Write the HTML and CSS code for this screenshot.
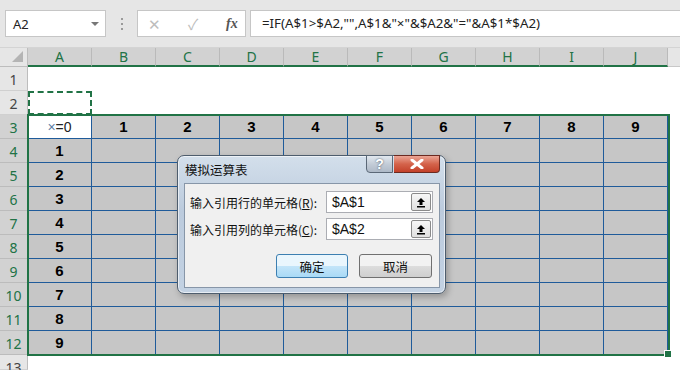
FILE: index.html
```html
<!DOCTYPE html>
<html lang="zh-CN">
<head>
    <meta charset="UTF-8">
    <title>模拟运算表</title>
    <link rel="stylesheet" href="styles.css">
</head>
<body>
    <div class="toolbar">
        <div class="namebox">
            <span>A2</span>
            <span class="caret"></span>
        </div>
        <div class="grip"><i></i><i></i><i></i></div>
        <div class="fxbox">
            <span class="cancel">✕</span>
            <span class="enter">✓</span>
            <span class="fx">fx</span>
        </div>
        <div class="formula">=IF(A$1&gt;$A2,"",A$1&amp;"×"&amp;$A2&amp;"="&amp;A$1*$A2)</div>
    </div>

    <div class="sheet">
        <div class="row head">
            <div class="rh corner"><span class="tri"></span></div>
            <div class="ch">A</div><div class="ch">B</div><div class="ch">C</div><div class="ch">D</div><div class="ch">E</div>
            <div class="ch">F</div><div class="ch">G</div><div class="ch">H</div><div class="ch">I</div><div class="ch">J</div>
            <div class="ch rest"></div>
        </div>
        <div class="row"><div class="rh">1</div><div class="blank"></div></div>
        <div class="row"><div class="rh">2</div><div class="blank"></div></div>
        <div class="row">
            <div class="rh sel">3</div>
            <div class="c corner-cell"><span class="times">×</span>=0</div>
            <div class="c b">1</div><div class="c b">2</div><div class="c b">3</div><div class="c b">4</div><div class="c b">5</div>
            <div class="c b">6</div><div class="c b">7</div><div class="c b">8</div><div class="c b">9</div>
            <div class="blank"></div>
        </div>
        <div class="row"><div class="rh sel">4</div><div class="c b">1</div><div class="c"></div><div class="c"></div><div class="c"></div><div class="c"></div><div class="c"></div><div class="c"></div><div class="c"></div><div class="c"></div><div class="c"></div><div class="blank"></div></div>
        <div class="row"><div class="rh sel">5</div><div class="c b">2</div><div class="c"></div><div class="c"></div><div class="c"></div><div class="c"></div><div class="c"></div><div class="c"></div><div class="c"></div><div class="c"></div><div class="c"></div><div class="blank"></div></div>
        <div class="row"><div class="rh sel">6</div><div class="c b">3</div><div class="c"></div><div class="c"></div><div class="c"></div><div class="c"></div><div class="c"></div><div class="c"></div><div class="c"></div><div class="c"></div><div class="c"></div><div class="blank"></div></div>
        <div class="row"><div class="rh sel">7</div><div class="c b">4</div><div class="c"></div><div class="c"></div><div class="c"></div><div class="c"></div><div class="c"></div><div class="c"></div><div class="c"></div><div class="c"></div><div class="c"></div><div class="blank"></div></div>
        <div class="row"><div class="rh sel">8</div><div class="c b">5</div><div class="c"></div><div class="c"></div><div class="c"></div><div class="c"></div><div class="c"></div><div class="c"></div><div class="c"></div><div class="c"></div><div class="c"></div><div class="blank"></div></div>
        <div class="row"><div class="rh sel">9</div><div class="c b">6</div><div class="c"></div><div class="c"></div><div class="c"></div><div class="c"></div><div class="c"></div><div class="c"></div><div class="c"></div><div class="c"></div><div class="c"></div><div class="blank"></div></div>
        <div class="row"><div class="rh sel">10</div><div class="c b">7</div><div class="c"></div><div class="c"></div><div class="c"></div><div class="c"></div><div class="c"></div><div class="c"></div><div class="c"></div><div class="c"></div><div class="c"></div><div class="blank"></div></div>
        <div class="row"><div class="rh sel">11</div><div class="c b">8</div><div class="c"></div><div class="c"></div><div class="c"></div><div class="c"></div><div class="c"></div><div class="c"></div><div class="c"></div><div class="c"></div><div class="c"></div><div class="blank"></div></div>
        <div class="row"><div class="rh sel">12</div><div class="c b">9</div><div class="c"></div><div class="c"></div><div class="c"></div><div class="c"></div><div class="c"></div><div class="c"></div><div class="c"></div><div class="c"></div><div class="c"></div><div class="blank"></div></div>
        <div class="row last"><div class="rh">13</div><div class="blank"></div></div>

        <!-- overlays: copy marquee, selection box -->
        <div class="marquee"></div>
        <div class="selection"><span class="handle"></span></div>
    </div>

    <div class="dialog">
        <div class="title">模拟运算表</div>
        <div class="help">?</div>
        <div class="close">
            <svg width="14" height="10" viewBox="0 0 14 10"><path d="M2 1 L12 9 M12 1 L2 9" stroke="#fff" stroke-width="3" stroke-linecap="round"/></svg>
        </div>
        <div class="client">
            <div class="field">
                <label>输入引用行的单元格(<u>R</u>):</label>
                <div class="input">
                    <span>$A$1</span>
                    <span class="pick"><svg width="10" height="11" viewBox="0 0 10 11"><path d="M5 1 L9 5 H6.5 V8 H3.5 V5 H1 Z" fill="#000"/><rect x="1" y="9" width="8" height="1.5" fill="#000"/></svg></span>
                </div>
            </div>
            <div class="field">
                <label>输入引用列的单元格(<u>C</u>):</label>
                <div class="input">
                    <span>$A$2</span>
                    <span class="pick"><svg width="10" height="11" viewBox="0 0 10 11"><path d="M5 1 L9 5 H6.5 V8 H3.5 V5 H1 Z" fill="#000"/><rect x="1" y="9" width="8" height="1.5" fill="#000"/></svg></span>
                </div>
            </div>
            <div class="buttons">
                <button class="ok">确定</button>
                <button>取消</button>
            </div>
        </div>
    </div>
</body>
</html>
```

FILE: styles.css
```css
body {
    margin: 0;
    width: 680px;
    height: 370px;
    overflow: hidden;
    position: relative;
    font-family: "Noto Sans", "Noto Sans CJK SC", sans-serif;
    background-color: #ffffff;
}
.toolbar {
    height: 48px;
    box-sizing: border-box;
    background-color: #e6e6e6;
    border-bottom: 1px solid #d4d4d4;
    display: flex;
    align-items: center;
    padding-left: 5px;
}
.namebox {
    width: 101px;
    height: 27px;
    box-sizing: border-box;
    background-color: #fff;
    border: 1px solid #c6c6c6;
    display: flex;
    align-items: center;
    justify-content: space-between;
    padding: 0 6px 0 7px;
    font-size: 13px;
    color: #222;
}
.caret {
    width: 0;
    height: 0;
    border-left: 4px solid transparent;
    border-right: 4px solid transparent;
    border-top: 4px solid #777;
}
.grip {
    width: 31px;
    display: flex;
    flex-direction: column;
    align-items: center;
    gap: 3px;
}
.grip i {
    width: 2px;
    height: 2px;
    background-color: #9a9a9a;
}
.fxbox {
    width: 109px;
    height: 27px;
    box-sizing: border-box;
    background-color: #fff;
    border: 1px solid #c6c6c6;
    display: flex;
    align-items: center;
    font-size: 15px;
    color: #bdbdbd;
}
.cancel { margin-left: 10px; width: 40px; }
.enter { width: 38px; }
.fx {
    font-family: "Liberation Serif", serif;
    font-style: italic;
    font-weight: bold;
    color: #555;
    font-size: 14px;
}
.formula {
    margin-left: 4px;
    flex: 1;
    height: 27px;
    box-sizing: border-box;
    background-color: #fff;
    border: 1px solid #c6c6c6;
    border-right: none;
    padding-left: 11px;
    font-size: 13.3px;
    line-height: 25px;
    color: #222;
}
.sheet {
    position: relative;
}
.row {
    display: flex;
    height: 24px;
}
.row.head {
    height: 19px;
}
.row.last {
    height: 15px;
}
.rh {
    width: 28px;
    flex: none;
    box-sizing: border-box;
    background-color: #e6e6e6;
    border-right: 1px solid #bdbdbd;
    border-bottom: 1px solid #d0d0d0;
    color: #444;
    font-size: 14px;
    text-align: center;
    line-height: 26px;
}
.rh.sel {
    background-color: #d2d2d2;
    color: #217346;
    border-bottom-color: #bcbcbc;
}
.rh.corner {
    position: relative;
    border-bottom: 1px solid #bdbdbd;
}
.tri {
    position: absolute;
    right: 4px;
    bottom: 4px;
    width: 0;
    height: 0;
    border-left: 11px solid transparent;
    border-bottom: 11px solid #b4b4b4;
}
.ch {
    width: 64px;
    flex: none;
    box-sizing: border-box;
    background-color: #d2d2d2;
    border-right: 1px solid #bababa;
    border-bottom: 2px solid #217346;
    color: #217346;
    font-size: 14px;
    text-align: center;
    line-height: 18px;
}
.ch.rest {
    flex: 1;
    background-color: #e6e6e6;
    border-right: none;
    border-bottom: 1px solid #c8c8c8;
}
.blank {
    flex: 1;
}
.c {
    width: 64px;
    flex: none;
    box-sizing: border-box;
    background-color: #c6c6c6;
    border-right: 1px solid #1f5b9a;
    border-bottom: 1px solid #1f5b9a;
    font-family: "Liberation Sans", sans-serif;
    font-size: 15px;
    text-align: center;
    line-height: 24px;
    color: #000;
}
.c.b {
    font-weight: bold;
}
.c.corner-cell {
    background-color: #fff;
    font-size: 14px;
    color: #222;
}
.times {
    color: #5e7fa6;
}
.marquee {
    position: absolute;
    left: 28px;
    top: 43px;
    width: 64px;
    height: 24px;
    box-sizing: border-box;
    border: 2px dashed #217346;
}
.selection {
    position: absolute;
    left: 27px;
    top: 66px;
    width: 643px;
    height: 242px;
    box-sizing: border-box;
    border: 2px solid #217346;
}
.handle {
    position: absolute;
    right: -4px;
    bottom: -4px;
    width: 6px;
    height: 6px;
    background-color: #217346;
    border: 1px solid #fff;
}
.dialog {
    position: absolute;
    left: 177px;
    top: 155px;
    width: 269px;
    height: 139px;
    box-sizing: border-box;
    border: 1px solid #4e5d6d;
    border-radius: 7px;
    background: linear-gradient(#d3dfeb, #bccbdd 40%, #c3d2e3);
    box-shadow: inset 0 0 0 1px rgba(255, 255, 255, 0.6), 2px 3px 6px rgba(0, 0, 0, 0.25);
    padding: 27px 5px 5px 6px;
}
.title {
    position: absolute;
    left: 7px;
    top: 4px;
    font-family: "Noto Sans CJK SC", sans-serif;
    font-size: 12.5px;
    color: #111;
}
.help {
    position: absolute;
    left: 188px;
    top: -1px;
    width: 27px;
    height: 18px;
    box-sizing: border-box;
    border: 1px solid #5b6877;
    border-radius: 0 0 0 4px;
    background: linear-gradient(#e2e8ef, #c3ccd7 50%, #aeb9c7);
    color: #fff;
    font-family: "Liberation Sans", sans-serif;
    font-weight: bold;
    font-size: 14px;
    line-height: 16px;
    text-align: center;
    text-shadow: 0 0 2px #3d4a58;
}
.close {
    position: absolute;
    left: 216px;
    top: -1px;
    width: 46px;
    height: 18px;
    box-sizing: border-box;
    border: 1px solid #6b2a21;
    border-left: none;
    border-radius: 0 0 4px 0;
    background: linear-gradient(#eba595, #d4634b 50%, #c3412a);
    display: flex;
    align-items: center;
    justify-content: center;
}
.client {
    height: 105px;
    box-sizing: border-box;
    background-color: #f0f0f0;
    border: 1px solid #8796a8;
    padding: 7px 6px 0 5px;
    display: flex;
    flex-direction: column;
    gap: 5px;
    font-family: "Noto Sans CJK SC", sans-serif;
    font-size: 12px;
    color: #111;
}
.field {
    display: flex;
    align-items: center;
    justify-content: space-between;
}
.field label {
    white-space: nowrap;
}
.input {
    width: 107px;
    height: 22px;
    box-sizing: border-box;
    background-color: #fff;
    border: 1px solid #abadb3;
    display: flex;
    align-items: center;
    justify-content: space-between;
    padding-left: 5px;
    font-family: "Liberation Sans", sans-serif;
    font-size: 14px;
}
.pick {
    width: 20px;
    height: 18px;
    margin-right: 1px;
    box-sizing: border-box;
    border: 1px solid #8a8a8a;
    border-radius: 2px;
    background: linear-gradient(#f7f7f7, #e0e0e0);
    display: flex;
    align-items: center;
    justify-content: center;
}
.buttons {
    display: flex;
    justify-content: flex-end;
    gap: 11px;
    margin-top: 9px;
    padding-right: 1px;
}
.buttons button {
    width: 73px;
    height: 24px;
    border: 1px solid #707070;
    border-radius: 3px;
    background: linear-gradient(#f2f2f2 50%, #dddddd 50%, #cfcfcf);
    font-family: "Noto Sans CJK SC", sans-serif;
    font-size: 12.5px;
    color: #111;
    padding: 0;
}
.buttons button.ok {
    width: 72px;
    border-color: #3c7fb1;
    background: linear-gradient(#eaf6fd 50%, #c4e5f9 50%, #a9daf6);
}
```
